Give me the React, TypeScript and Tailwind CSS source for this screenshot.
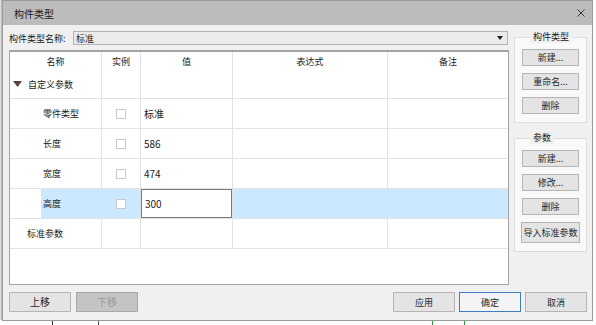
import React from "react";

// 构件类型对话框

type Row = {
  name: string;
  indent: number;
  check?: boolean;
  value?: string;
  selected?: boolean;
};

const rows: Row[] = [
  { name: "零件类型", indent: 33, check: true, value: "标准" },
  { name: "长度", indent: 33, check: true, value: "586" },
  { name: "宽度", indent: 33, check: true, value: "474" },
  { name: "高度", indent: 33, check: true, value: "300", selected: true },
  { name: "标准参数", indent: 17 },
];

function Btn({
  children,
  className = "",
  disabled = false,
  primary = false,
}: {
  children: React.ReactNode;
  className?: string;
  disabled?: boolean;
  primary?: boolean;
}) {
  const look = disabled
    ? "bg-[#c4c4c4] border-[#a8a8a8] text-[#9a9a9a]"
    : primary
    ? "bg-[#f4f4f4] border-[#3e7bc0] text-[#262626]"
    : "bg-[#e4e4e4] border-[#b4b4b4] text-[#262626]";
  return (
    <div
      className={
        "flex items-center justify-center border text-[9px] leading-none " + look + " " + className
      }
    >
      {children}
    </div>
  );
}

function Check() {
  return <div className="w-[10px] h-[10px] border border-[#c9c9c9] bg-white" />;
}

function Group({ title, children }: { title: string; children: React.ReactNode }) {
  return (
    <fieldset className="border border-[#dcdcdc] bg-[#f9f9f9] px-[7px] pb-[8px] pt-[6px] flex flex-col gap-[7px]">
      <legend className="ml-[8px] px-[3px] text-[9px] leading-[12px] text-[#1a1a1a] bg-[#f0f0f0]">
        {title}
      </legend>
      {children}
    </fieldset>
  );
}

export default function App() {
  return (
    <div className="relative w-[596px] h-[325px] bg-white flex overflow-hidden font-['Noto_Sans_CJK_SC',sans-serif]">
      {/* 背景窗口的左侧边缘 */}
      <div className="w-[2px] h-[320px] bg-[#dadada] border-r border-[#bdbdbd]" />

      <div className="w-[591px] h-[321px] flex flex-col border border-[#9a9a9a] bg-[#f0f0f0]">
        {/* 标题栏 */}
        <div className="h-[24px] shrink-0 flex items-center justify-between bg-[#bcbcbc] pl-[11px] pr-[7px]">
          <span className="text-[10px] text-[#1a1a1a]">构件类型</span>
          <svg width="8" height="8" viewBox="0 0 8 8">
            <path d="M0.5 0.5 L7.5 7.5 M7.5 0.5 L0.5 7.5" stroke="#333" strokeWidth="1" />
          </svg>
        </div>

        {/* 主体 */}
        <div className="flex-1 flex flex-col pl-[6px] pr-[5px] pt-[6px]">
          <div className="flex">
            {/* 左侧：名称 + 表格 */}
            <div className="w-[500px] flex flex-col">
              <div className="flex items-center h-[14px]">
                <span className="w-[64px] text-[9px] text-[#1a1a1a] leading-none">构件类型名称:</span>
                <div className="w-[435px] h-[14px] flex items-center justify-between border border-[#b3b3b3] bg-[#ebebeb] pl-[2px] pr-[4px]">
                  <span className="text-[9px] text-[#1a1a1a] leading-none">标准</span>
                  <svg width="6" height="4" viewBox="0 0 6 4">
                    <path d="M0 0 L6 0 L3 4 Z" fill="#222" />
                  </svg>
                </div>
              </div>

              <div className="mt-[5px] h-[235px] border border-[#a3a3a3] border-t-2 bg-white text-[9px] text-[#1a1a1a] leading-none">
                <div className="grid grid-cols-[92px_39px_92px_155px_120px]">
                  {/* 表头 */}
                  {["名称", "实例", "值", "表达式", "备注"].map((h, i) => (
                    <div
                      key={h}
                      className={
                        "h-[18px] flex items-center justify-center " +
                        (i < 4 ? "border-r border-[#e2e2e2]" : "")
                      }
                    >
                      {h}
                    </div>
                  ))}

                  {/* 分组行 */}
                  <div className="h-[29px] flex items-center pl-[3px] gap-[6px] border-r border-b border-[#e2e2e2]">
                    <svg width="9" height="6" viewBox="0 0 9 6">
                      <path d="M0 0 L9 0 L4.5 6 Z" fill="#5e3f3f" />
                    </svg>
                    <span>自定义参数</span>
                  </div>
                  <div className="h-[29px] border-r border-b border-[#e2e2e2]" />
                  <div className="h-[29px] border-r border-b border-[#e2e2e2]" />
                  <div className="h-[29px] border-r border-b border-[#e2e2e2]" />
                  <div className="h-[29px] border-b border-[#e2e2e2]" />

                  {rows.map((r) => {
                    const bg = r.selected ? "bg-[#cce8ff]" : "";
                    return (
                      <React.Fragment key={r.name}>
                        <div className="h-[30px] flex border-r border-b border-[#e2e2e2]">
                          <div
                            className={"flex-1 flex items-center " + bg}
                            style={{
                              marginLeft: r.selected ? r.indent - 2 : 0,
                              paddingLeft: r.selected ? 2 : r.indent,
                            }}
                          >
                            {r.name}
                          </div>
                        </div>
                        <div
                          className={
                            "h-[30px] flex items-center justify-center border-r border-b border-[#e2e2e2] " + bg
                          }
                        >
                          {r.check && <Check />}
                        </div>
                        <div className="h-[30px] border-r border-b border-[#e2e2e2] text-[10px]">
                          <div
                            className={
                              "h-full flex items-center pl-[3px] " +
                              (r.selected ? "bg-white border border-[#7b7b7b]" : "")
                            }
                          >
                            {r.value}
                          </div>
                        </div>
                        <div className={"h-[30px] border-r border-b border-[#e2e2e2] " + bg} />
                        <div className={"h-[30px] border-b border-[#e2e2e2] " + bg} />
                      </React.Fragment>
                    );
                  })}
                </div>
              </div>
            </div>

            {/* 右侧按钮组 */}
            <div className="w-[73px] ml-[5px] flex flex-col gap-[9px]">
              <Group title="构件类型">
                <Btn className="h-[17px]">新建...</Btn>
                <Btn className="h-[17px]">重命名...</Btn>
                <Btn className="h-[17px]">删除</Btn>
              </Group>
              <Group title="参数">
                <Btn className="h-[17px]">新建...</Btn>
                <Btn className="h-[17px]">修改...</Btn>
                <Btn className="h-[17px]">删除</Btn>
                <Btn className="h-[21px] -mx-[1px]">导入标准参数</Btn>
              </Group>
            </div>
          </div>

          {/* 底部按钮 */}
          <div className="mt-[7px] flex items-center">
            <Btn className="w-[62px] h-[20px] text-[10px]">上移</Btn>
            <Btn className="ml-[5px] w-[62px] h-[20px] text-[10px]" disabled>
              下移
            </Btn>
            <div className="flex-1" />
            <Btn className="w-[62px] h-[20px]">应用</Btn>
            <Btn className="ml-[4px] w-[62px] h-[20px]" primary>
              确定
            </Btn>
            <Btn className="ml-[4px] w-[62px] h-[20px]">取消</Btn>
          </div>
        </div>
      </div>

      {/* 对话框下方的画布内容 */}
      <div className="absolute left-[52px] top-[321px] w-px h-[4px] bg-[#333]" />
      <div className="absolute left-[98px] top-[321px] w-px h-[4px] bg-[#555]" />
      <div className="absolute left-[432px] top-[321px] w-px h-[4px] bg-[#2f9a3f]" />
      <div className="absolute left-[464px] top-[321px] w-px h-[4px] bg-[#2f9a3f]" />
    </div>
  );
}
